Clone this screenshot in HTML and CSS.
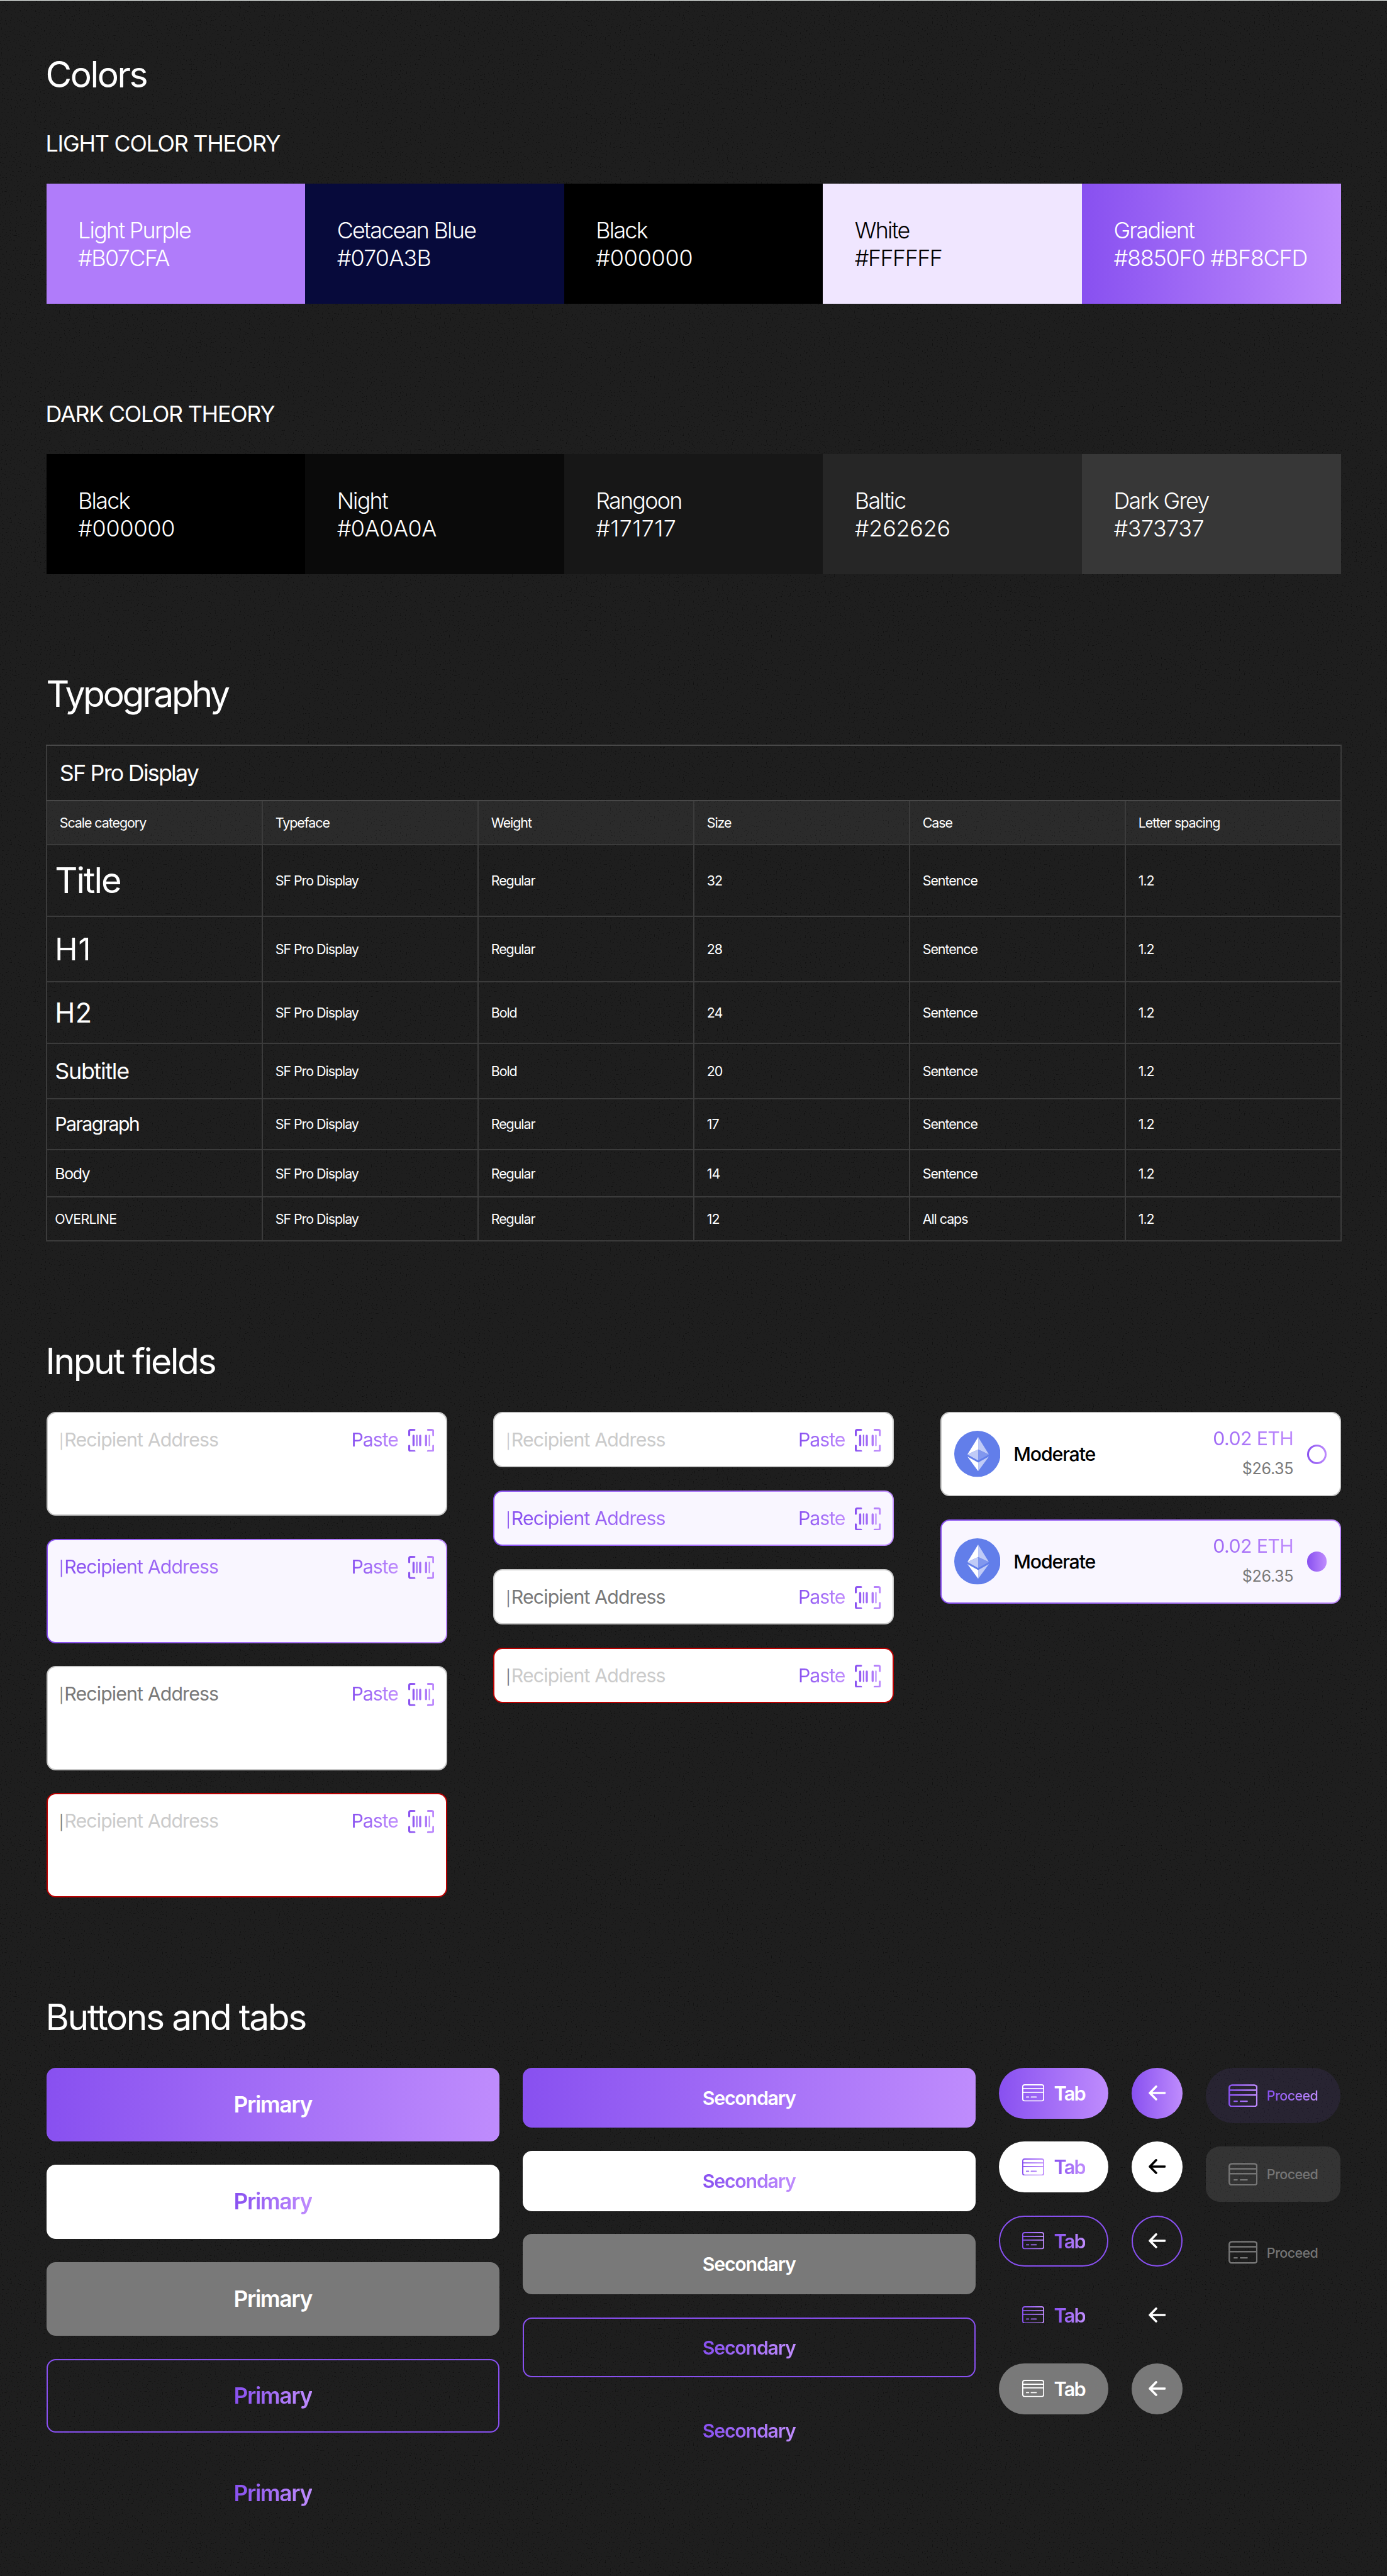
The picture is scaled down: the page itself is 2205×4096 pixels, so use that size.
FILE: index.html
```html
<!DOCTYPE html>
<html lang="en">
<head>
<meta charset="utf-8">
<title>Wallet UI kit</title>
<link rel="stylesheet" href="styles.css">
</head>
<body>
<svg class="defs" aria-hidden="true">
  <defs>
    <linearGradient id="card-ink" gradientUnits="userSpaceOnUse" x1="0" y1="0" x2="51" y2="0"><stop offset="0" stop-color="#8850F0"/><stop offset="1" stop-color="#BF8CFD"/></linearGradient>
    <linearGradient id="scan-ink" gradientUnits="userSpaceOnUse" x1="0" y1="0" x2="45" y2="0"><stop offset="0" stop-color="#8850F0"/><stop offset="1" stop-color="#BF8CFD"/></linearGradient>
    <symbol id="card" viewBox="0 0 51 40">
      <g fill="none" stroke-width="2.7">
        <rect x="1.35" y="1.35" width="48.3" height="37.3" rx="4.6"/>
        <path d="M1.5 10.3H49.5M1.5 18.7H49.5"/>
        <path d="M10 29.6H15M21 29.6H32.5" stroke-linecap="round"/>
      </g>
    </symbol>
    <symbol id="scan" viewBox="0 0 45 40">
      <g fill="none" stroke-linecap="round" stroke-linejoin="round">
        <path stroke-width="3.4" d="M1.7 10.8V4.2Q1.7 1.7 4.2 1.7H10.8M34.2 1.7H40.8Q43.3 1.7 43.3 4.2V10.8M43.3 29.2V35.8Q43.3 38.3 40.8 38.3H34.2M10.8 38.3H4.2Q1.7 38.3 1.7 35.8V29.2"/>
        <path stroke-width="3.7" d="M9.2 12V28M20.7 12V28M30.8 12V28"/>
        <path stroke-width="2.2" d="M15 11.2V28.8M36.5 11.2V28.8"/>
      </g>
    </symbol>
    <symbol id="arrow" viewBox="0 0 30 26">
      <path fill="none" stroke-width="3.9" stroke-linecap="round" stroke-linejoin="round" d="M28 13H2M13 2 2.2 13 13 24"/>
    </symbol>
    <symbol id="eth" viewBox="0 0 80 80">
      <circle cx="40" cy="40" r="40" fill="#627EEA"/>
      <path fill="#fff" d="M41.4 11 22.8 41 41.4 32.4Z"/>
      <path fill="#C0CBF7" d="M41.4 11 60 41 41.4 32.4Z"/>
      <path fill="#C0CBF7" d="M41.4 32.4 22.8 41 41.4 51.4Z"/>
      <path fill="#8197EE" d="M41.4 32.4 60 41 41.4 51.4Z"/>
      <path fill="#fff" d="M22.8 44.6 41.4 54.9V69.8Z"/>
      <path fill="#C0CBF7" d="M60 44.6 41.4 54.9V69.8Z"/>
    </symbol>
  </defs>
</svg>

<main class="page">
  <section>
    <h1>Colors</h1>
    <h2>LIGHT COLOR THEORY</h2>
    <div class="swatches">
      <div class="swatch light-purple">Light Purple<br><span class="hex t3">#B07CFA</span></div>
      <div class="swatch cetacean">Cetacean Blue<br><span class="hex t2">#070A3B</span></div>
      <div class="swatch black">Black<br><span class="hex">#000000</span></div>
      <div class="swatch white">White<br><span class="hex t3">#FFFFFF</span></div>
      <div class="swatch gradient">Gradient<br><span class="hex t4">#8850F0 #BF8CFD</span></div>
    </div>
    <h2 class="second">DARK COLOR THEORY</h2>
    <div class="swatches">
      <div class="swatch black">Black<br><span class="hex">#000000</span></div>
      <div class="swatch night">Night<br><span class="hex t1">#0A0A0A</span></div>
      <div class="swatch rangoon">Rangoon<br><span class="hex t0">#171717</span></div>
      <div class="swatch baltic">Baltic<br><span class="hex">#262626</span></div>
      <div class="swatch dark-grey">Dark Grey<br><span class="hex t1">#373737</span></div>
    </div>
  </section>

  <section>
    <h1 class="tight">Typography</h1>
    <div class="type-table">
      <div class="row name"><div>SF Pro Display</div></div>
      <div class="row head"><div>Scale category</div><div>Typeface</div><div>Weight</div><div>Size</div><div>Case</div><div>Letter spacing</div></div>
      <div class="row r-title"><div>Title</div><div>SF Pro Display</div><div>Regular</div><div>32</div><div>Sentence</div><div>1.2</div></div>
      <div class="row r-h1"><div>H1</div><div>SF Pro Display</div><div>Regular</div><div>28</div><div>Sentence</div><div>1.2</div></div>
      <div class="row r-h2"><div>H2</div><div>SF Pro Display</div><div>Bold</div><div>24</div><div>Sentence</div><div>1.2</div></div>
      <div class="row r-subtitle"><div>Subtitle</div><div>SF Pro Display</div><div>Bold</div><div>20</div><div>Sentence</div><div>1.2</div></div>
      <div class="row r-paragraph"><div>Paragraph</div><div>SF Pro Display</div><div>Regular</div><div>17</div><div>Sentence</div><div>1.2</div></div>
      <div class="row r-body"><div>Body</div><div>SF Pro Display</div><div>Regular</div><div>14</div><div>Sentence</div><div>1.2</div></div>
      <div class="row r-overline"><div>OVERLINE</div><div>SF Pro Display</div><div>Regular</div><div>12</div><div>All caps</div><div>1.2</div></div>
    </div>
  </section>

  <section>
    <h1>Input fields</h1>
    <div class="fields">
      <div class="stack tall">
        <div class="field"><span class="value"><span class="caret">|</span>Recipient Address</span><span class="paste">Paste</span><svg class="scan" stroke="url(#scan-ink)"><use href="#scan"/></svg></div>
        <div class="field active"><span class="value"><span class="caret">|</span>Recipient Address</span><span class="paste">Paste</span><svg class="scan" stroke="url(#scan-ink)"><use href="#scan"/></svg></div>
        <div class="field filled"><span class="value"><span class="caret">|</span>Recipient Address</span><span class="paste">Paste</span><svg class="scan" stroke="url(#scan-ink)"><use href="#scan"/></svg></div>
        <div class="field error"><span class="value"><span class="caret">|</span>Recipient Address</span><span class="paste">Paste</span><svg class="scan" stroke="url(#scan-ink)"><use href="#scan"/></svg></div>
      </div>
      <div class="stack">
        <div class="field"><span class="value"><span class="caret">|</span>Recipient Address</span><span class="paste">Paste</span><svg class="scan" stroke="url(#scan-ink)"><use href="#scan"/></svg></div>
        <div class="field active"><span class="value"><span class="caret">|</span>Recipient Address</span><span class="paste">Paste</span><svg class="scan" stroke="url(#scan-ink)"><use href="#scan"/></svg></div>
        <div class="field filled"><span class="value"><span class="caret">|</span>Recipient Address</span><span class="paste">Paste</span><svg class="scan" stroke="url(#scan-ink)"><use href="#scan"/></svg></div>
        <div class="field error"><span class="value"><span class="caret">|</span>Recipient Address</span><span class="paste">Paste</span><svg class="scan" stroke="url(#scan-ink)"><use href="#scan"/></svg></div>
      </div>
      <div class="stack">
        <div class="fee"><svg class="coin"><use href="#eth"/></svg><span class="speed">Moderate</span><div class="amount"><div class="eth">0.02 ETH</div><div class="usd">$26.35</div></div><span class="radio"></span></div>
        <div class="fee active"><svg class="coin"><use href="#eth"/></svg><span class="speed">Moderate</span><div class="amount"><div class="eth">0.02 ETH</div><div class="usd">$26.35</div></div><span class="radio on"></span></div>
      </div>
    </div>
  </section>

  <section>
    <h1>Buttons and tabs</h1>
    <div class="buttons">
      <div class="stack">
        <div class="btn primary fill">Primary</div>
        <div class="btn primary plain"><span class="ink">Primary</span></div>
        <div class="btn primary disabled">Primary</div>
        <div class="btn primary outline"><span class="ink">Primary</span></div>
        <div class="btn primary"><span class="ink">Primary</span></div>
      </div>
      <div class="stack">
        <div class="btn secondary fill">Secondary</div>
        <div class="btn secondary plain"><span class="ink">Secondary</span></div>
        <div class="btn secondary disabled">Secondary</div>
        <div class="btn secondary outline"><span class="ink">Secondary</span></div>
        <div class="btn secondary"><span class="ink">Secondary</span></div>
      </div>
      <div class="stack">
        <div class="btn tab fill"><svg stroke="#fff"><use href="#card"/></svg><span>Tab</span></div>
        <div class="btn tab plain"><svg stroke="url(#card-ink)"><use href="#card"/></svg><span class="ink">Tab</span></div>
        <div class="btn tab outline"><svg stroke="url(#card-ink)"><use href="#card"/></svg><span class="ink">Tab</span></div>
        <div class="btn tab"><svg stroke="url(#card-ink)"><use href="#card"/></svg><span class="ink">Tab</span></div>
        <div class="btn tab disabled"><svg stroke="#fff"><use href="#card"/></svg><span>Tab</span></div>
      </div>
      <div class="stack">
        <div class="btn back fill"><svg stroke="#fff"><use href="#arrow"/></svg></div>
        <div class="btn back plain"><svg stroke="#000"><use href="#arrow"/></svg></div>
        <div class="btn back outline"><svg stroke="#fff"><use href="#arrow"/></svg></div>
        <div class="btn back"><svg stroke="#fff"><use href="#arrow"/></svg></div>
        <div class="btn back disabled"><svg stroke="#fff"><use href="#arrow"/></svg></div>
      </div>
      <div class="stack">
        <div class="btn proceed tinted"><svg stroke="url(#card-ink)"><use href="#card"/></svg><span class="ink">Proceed</span></div>
        <div class="btn proceed muted grey"><svg stroke="#757575"><use href="#card"/></svg><span>Proceed</span></div>
        <div class="btn proceed muted"><svg stroke="#757575"><use href="#card"/></svg><span>Proceed</span></div>
      </div>
    </div>
  </section>
</main>
</body>
</html>
```
FILE: styles.css
```css
/* 1rem = 10 design units */
:root {
  font-size: 9.1875px;
  --violet: #8850F0;
  --lilac: #BF8CFD;
  --brand: linear-gradient(90deg, var(--violet), var(--lilac));
}

*, *::before, *::after { box-sizing: border-box; }

body {
  margin: 0;
  background-color: #1e1e1e;
  /* fine dark grain */
  background-image: url("data:image/svg+xml,%3Csvg xmlns='http://www.w3.org/2000/svg' width='700' height='700'%3E%3Cfilter id='n' x='0' y='0' width='1' height='1'%3E%3CfeTurbulence type='fractalNoise' baseFrequency='.5' numOctaves='1' seed='4' stitchTiles='stitch'/%3E%3CfeColorMatrix values='0 0 0 0 0 0 0 0 0 0 0 0 0 0 0 8 0 0 0 -5.1'/%3E%3C/filter%3E%3Crect width='700' height='700' filter='url(%23n)' opacity='.45'/%3E%3C/svg%3E");
  color: #fff;
  font-family: Inter, "Liberation Sans", sans-serif;
}

.defs { position: absolute; width: 0; height: 0; }

.page {
  height: 4096px;
  overflow: hidden;
  border-top: 1px solid #eef4f1;
  padding: 9rem 8rem 0;
  display: flex;
  flex-direction: column;
  gap: 17rem;
}

h1 {
  margin: 0 0 4.9rem -.1rem;
  font-size: 6.2rem;
  line-height: 7.6rem;
  font-weight: 400;
  letter-spacing: -.043em;
}
h1.tight { letter-spacing: -.058em; margin-left: 0; }
h1:has(+ h2) { margin-bottom: 5.7rem; }

h2 {
  margin: 0 0 4.6rem -.1rem;
  font-size: 3.9rem;
  line-height: 4.8rem;
  font-weight: 400;
  letter-spacing: -.035em;
}
h2.second { margin-top: 16.6rem; }

/* Colours */
.swatches { display: grid; grid-template-columns: repeat(5, 1fr); }
.swatch {
  height: 20.8rem;
  padding: 5.6rem 0 0 5.5rem;
  font-size: 3.9rem;
  line-height: 4.8rem;
  font-weight: 300;
  letter-spacing: -.048em;
  white-space: nowrap;
}
.hex { letter-spacing: -.005em; }
.hex.t0 { letter-spacing: .011em; }
.hex.t1 { letter-spacing: -.0126em; }
.hex.t2 { letter-spacing: -.022em; }
.hex.t3 { letter-spacing: -.0426em; }
.hex.t4 { letter-spacing: -.0325em; }
.light-purple { background: #B07CFA; }
.cetacean { background: #070A3B; }
.black { background: #000; }
.white { background: #F0E6FF; color: #000; }
.gradient { background: var(--brand); }
.night { background: #0A0A0A; }
.rangoon { background: #171717; }
.baltic { background: #262626; }
.dark-grey { background: #373737; }

/* Typography */
.type-table {
  margin: -.05rem -1px 0;
  border-right: 2px solid #3b3b3b;
  border-bottom: 2px solid #3b3b3b;
  font-size: 2.33rem;
  letter-spacing: -.048em;
}
.row {
  display: grid;
  grid-template-columns: repeat(6, 1fr);
  border-top: 2px solid #3b3b3b;
}
.row > div {
  display: flex;
  align-items: center;
  padding-left: 2.2rem;
  border-left: 2px solid #3b3b3b;
}
.row:nth-child(n+3) > div:first-child { padding-left: 1.4rem; }
.row.name { grid-template-columns: 1fr; height: 9.6rem; border-color: #484848; font-size: 3.9rem; letter-spacing: -.0496em; }
.row.head { height: 7.6rem; border-color: #484848; background: rgba(255, 255, 255, .06); }
.r-title { height: 12.4rem; }
.r-title > div:first-child { font-size: 6.1rem; letter-spacing: -.036em; }
.r-h1 { height: 11.4rem; }
.r-h1 > div:first-child { font-size: 5.3rem; letter-spacing: .02em; }
.r-h2 { height: 10.6rem; }
.r-h2 > div:first-child { font-size: 4.7rem; letter-spacing: .01em; }
.r-subtitle { height: 9.6rem; }
.r-subtitle > div:first-child { font-size: 3.9rem; letter-spacing: -.036em; }
.r-paragraph { height: 8.8rem; }
.r-paragraph > div:first-child { font-size: 3.3rem; letter-spacing: -.053em; }
.r-body { height: 8.2rem; }
.r-body > div:first-child { font-size: 2.7rem; letter-spacing: -.055em; }
.r-overline { height: 7.6rem; }
.r-overline > div:first-child { letter-spacing: -.034em; }

/* Input fields */
.stack { display: flex; flex-direction: column; gap: 4rem; }
.fields { display: grid; grid-template-columns: repeat(3, 1fr); column-gap: 8rem; align-items: start; }
.field, .fee {
  display: flex;
  border: 2px solid #c8c8c8;
  border-radius: 1.6rem;
  background: #fff;
}
.field {
  height: 9.6rem;
  padding: calc(2.6rem - 2px) calc(2.2rem - 2px) 0;
  font-size: 3.3rem;
  line-height: 4.4rem;
}
.tall .field { height: 18rem; }
.field.active, .fee.active {
  border-color: transparent;
  background: linear-gradient(#F9F6FF, #F9F6FF) padding-box, var(--brand) border-box;
}
.field.error { border-color: #B90000; }
.value { flex: 1; color: #cbcbcb; letter-spacing: -.029em; }
.caret { margin-right: .2rem; font-size: 2.5rem; }
.filled .value, .error .caret { color: #797979; }
.active .value, .paste, .eth, .ink {
  background: var(--brand);
  -webkit-background-clip: text;
  background-clip: text;
  color: transparent;
}
.paste { letter-spacing: -.034em; margin-right: 1.75rem; }
.scan { width: 4.5rem; height: 4rem; margin-top: .3rem; }

.fee {
  height: 14.6rem;
  align-items: center;
  padding: 0 calc(2.4rem - 2px);
}
.coin { width: 8rem; height: 8rem; }
.speed { margin-left: 2.3rem; flex: 1; color: #000; font-size: 3.3rem; font-weight: 500; letter-spacing: -.037em; }
.amount { width: 23rem; margin-right: 2.4rem; text-align: right; line-height: 5.2rem; }
.eth { font-size: 3.3rem; letter-spacing: -.02em; }
.usd { font-size: 2.72rem; letter-spacing: -.0115em; color: #797979; }
.radio {
  width: 3.4rem;
  height: 3.4rem;
  border: 3px solid transparent;
  border-radius: 50%;
  background: linear-gradient(#fff, #fff) padding-box, var(--brand) border-box;
}
.radio.on { border: 0; background: var(--brand); }

/* Buttons and tabs */
.buttons { display: grid; grid-template-columns: 78.4rem 78.4rem 19rem 8.8rem 23.4rem; gap: 4rem; align-items: start; }
.btn { display: flex; align-items: center; justify-content: center; font-weight: 600; border-radius: 1.6rem; }
.btn svg { flex: none; }
.fill { background: var(--brand); }
.plain { background: #fff; }
.disabled { background: #797979; }
.outline { border: 2px solid var(--violet); }
.primary { height: 12.8rem; font-size: 3.85rem; letter-spacing: -.0386em; }
.secondary { height: 10.4rem; font-size: 3.3rem; letter-spacing: -.04em; }
.tab { height: 8.8rem; border-radius: 4.4rem; font-size: 3.35rem; letter-spacing: -.06em; gap: 1.7rem; }
.tab svg { width: 3.82rem; height: 3rem; margin-top: -.1rem; }
.back { height: 8.8rem; border-radius: 50%; }
.back svg { width: 3rem; height: 2.6rem; margin-top: -.1rem; }
.proceed { height: 9.6rem; font-size: 2.33rem; font-weight: 500; letter-spacing: -.024em; gap: 1.6rem; }
.proceed svg { width: 5.05rem; height: 4rem; }
.tinted { border-radius: 4.8rem; background: rgba(136, 100, 240, .1); }
.muted { color: #757575; }
.grey { border-radius: 2.4rem; background: rgba(255, 255, 255, .1); }
```
